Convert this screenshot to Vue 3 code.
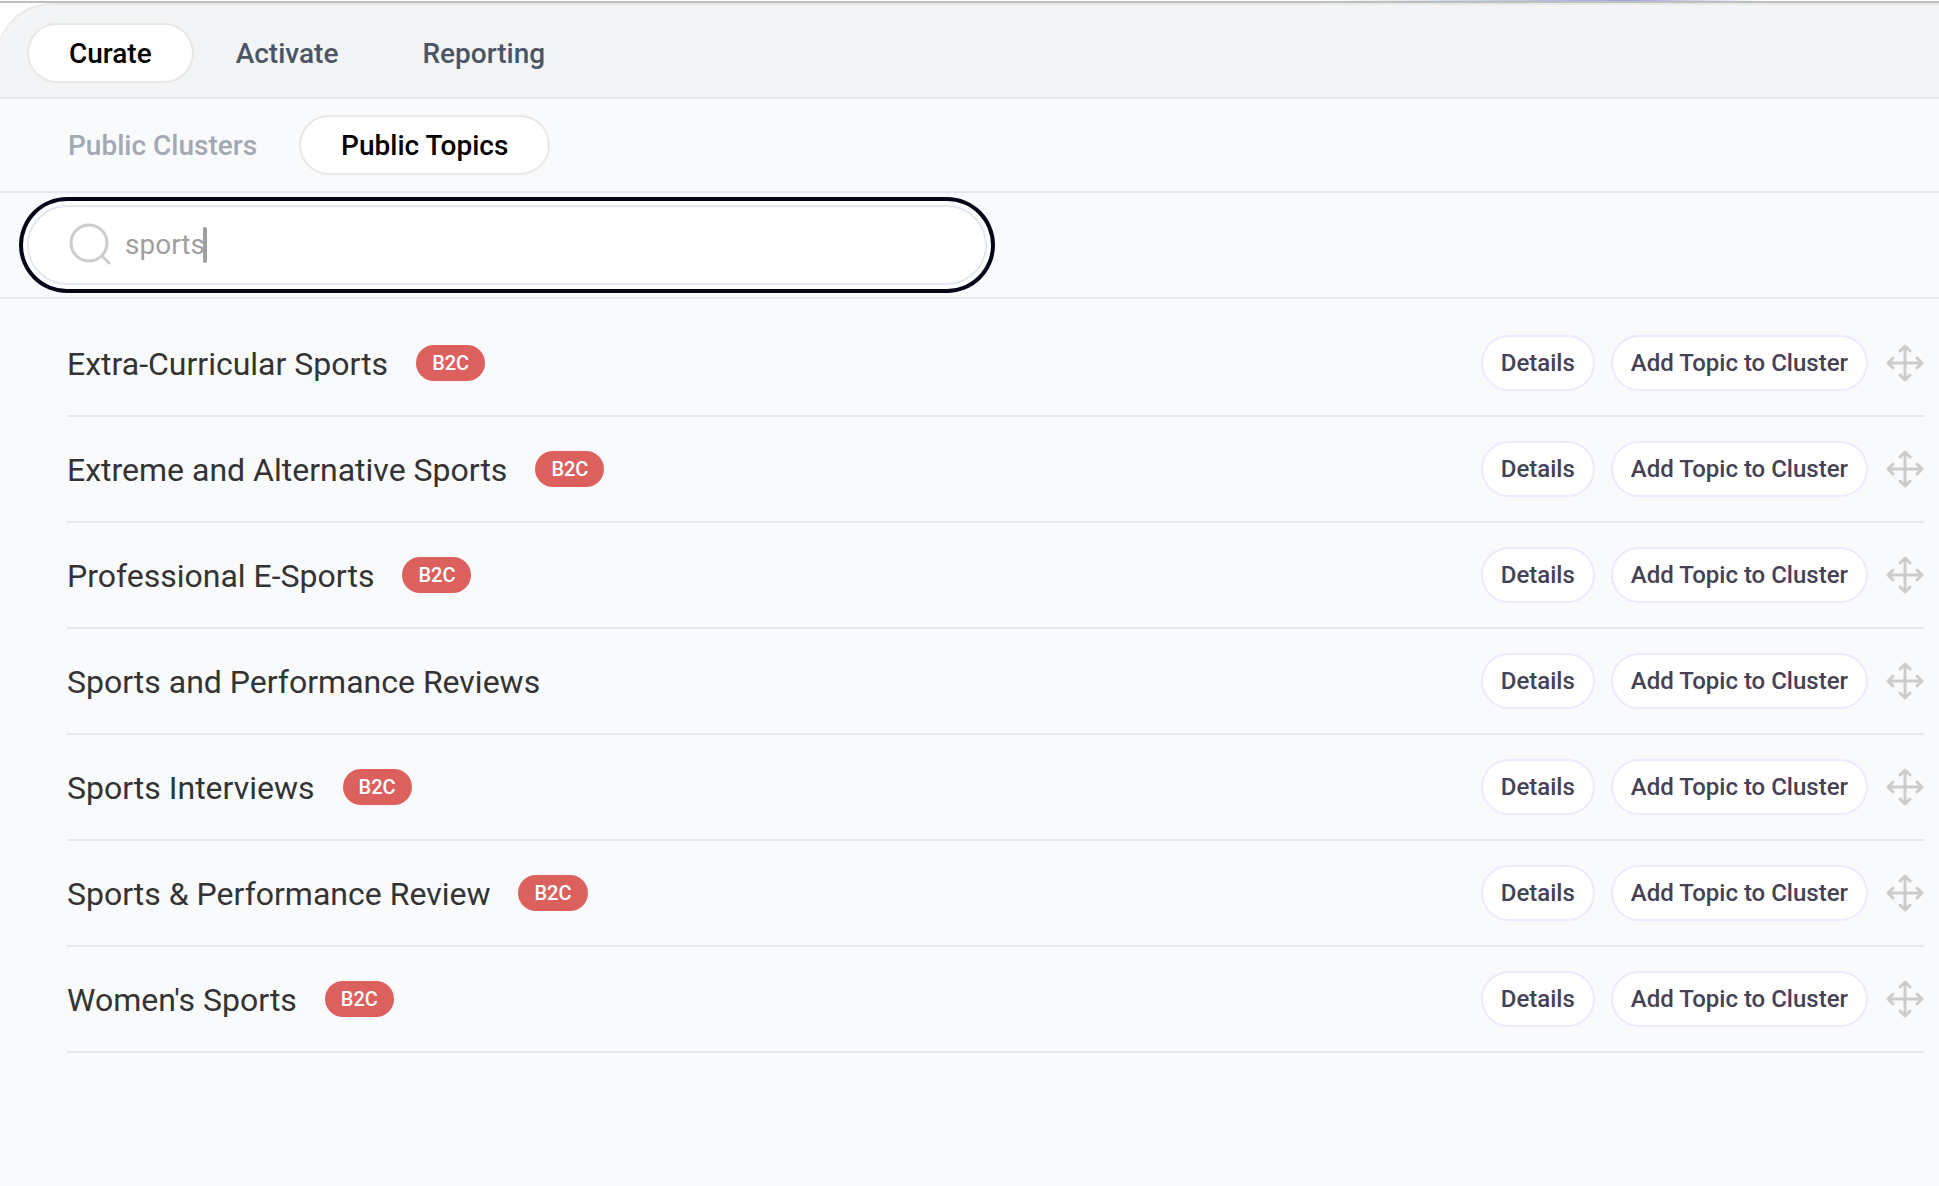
<script setup>
import { ref } from 'vue'

const query = ref('sports')
const mainTabs = ['Curate', 'Activate', 'Reporting']
const subTabs = ['Public Clusters', 'Public Topics']
const mainTab = ref('Curate')
const subTab = ref('Public Topics')

const topics = [
  { name: 'Extra-Curricular Sports', tag: 'B2C' },
  { name: 'Extreme and Alternative Sports', tag: 'B2C' },
  { name: 'Professional E-Sports', tag: 'B2C' },
  { name: 'Sports and Performance Reviews' },
  { name: 'Sports Interviews', tag: 'B2C' },
  { name: 'Sports & Performance Review', tag: 'B2C' },
  { name: "Women's Sports", tag: 'B2C' },
]
</script>

<template>
  <div class="app">
    <div class="topline"></div>
    <header class="header">
      <nav class="tabs main-tabs">
        <button
          v-for="tab in mainTabs"
          :key="tab"
          type="button"
          class="tab"
          :class="{ active: tab === mainTab }"
          @click="mainTab = tab"
        >{{ tab }}</button>
      </nav>
    </header>

    <nav class="tabs sub-tabs">
      <button
        v-for="tab in subTabs"
        :key="tab"
        type="button"
        class="tab"
        :class="{ active: tab === subTab }"
        @click="subTab = tab"
      >{{ tab }}</button>
    </nav>

    <section class="search-bar">
      <label class="search">
        <svg class="search-icon" viewBox="0 0 42 42" aria-hidden="true">
          <circle cx="20" cy="19" r="18" />
          <path d="M33 32l7 7" />
        </svg>
        <input v-model="query" class="search-input" type="text" aria-label="Search topics" />
        <span class="caret"></span>
      </label>
    </section>

    <ul class="topics">
      <li v-for="topic in topics" :key="topic.name" class="topic">
        <span class="name">{{ topic.name }}</span>
        <span v-if="topic.tag" class="badge">{{ topic.tag }}</span>
        <div class="actions">
          <button type="button" class="action">Details</button>
          <button type="button" class="action">Add Topic to Cluster</button>
          <svg class="move" viewBox="0 0 40 40" aria-hidden="true">
            <path d="M21 4v32M5 20h32M16 8l5-5 5 5M16 32l5 5 5-5M9 15l-5 5 5 5M33 15l5 5-5 5" />
          </svg>
        </div>
      </li>
    </ul>
  </div>
</template>

<style>
body {
  background: #f9fafc;
}
</style>

<style scoped>
.app {
  min-height: 100vh;
  overflow-x: hidden;
  font-family: Roboto, "Liberation Sans", sans-serif;
  color: #333;
}

button,
input {
  font-family: inherit;
}

.topline {
  height: 1px;
  border-bottom: 2px solid #bdc0bd;
  background: linear-gradient(90deg, #fff 68%, #c4d4ea 76%, #9fa4e6 84%, #fff 91%);
}

.header {
  background: #fff;
}

.tabs {
  display: flex;
  border-bottom: 2px solid #e5e7eb;
}

.main-tabs {
  margin-left: -4px;
  padding: 18px 30px 14px;
  border-top: 2px solid #e7e8e8;
  border-left: 1px solid #e7e8e8;
  border-top-left-radius: 56px;
  background: #f3f4f6;
}

.sub-tabs {
  padding: 16px 26px;
}

.tab {
  height: 60px;
  padding: 2px 40px 0;
  border: 2px solid transparent;
  border-radius: 30px;
  background: transparent;
  color: #4b5563;
  font-size: 28px;
  font-weight: 500;
  line-height: 36px;
}

.sub-tabs .tab {
  color: #a3a8b2;
}

.tabs .tab.active {
  border-color: #e7e8e8;
  background: #fff;
  color: #000;
}

.search-bar {
  padding: 12px 27px;
  border-bottom: 2px solid #e5e7eb;
}

.search {
  display: flex;
  align-items: center;
  box-sizing: border-box;
  max-width: 960px;
  height: 80px;
  padding: 0 40px;
  border: 2px solid #e2e8f0;
  border-radius: 40px;
  background: #fff;
  box-shadow: 0 0 0 4px #fff, 0 0 0 8px #020617;
}

.search-icon {
  width: 42px;
  height: 42px;
  margin-right: 14px;
  overflow: visible;
  fill: none;
  stroke: #ccc;
  stroke-width: 3;
  stroke-linecap: round;
}

.search-input {
  field-sizing: content;
  padding: 0;
  border: 0;
  outline: 0;
  background: transparent;
  color: #9f9f9f;
  font-size: 28px;
  line-height: 36px;
}

.caret {
  width: 4px;
  height: 36px;
  margin-left: -2px;
  border-radius: 2px;
  background: #9f9f9f;
}

.topics {
  margin: 0;
  padding: 12px 15px 0 67px;
  list-style: none;
}

.topic {
  display: flex;
  align-items: center;
  height: 104px;
  border-bottom: 2px solid #e2e8f0;
}

.name {
  padding-top: 2px;
  font-size: 32px;
  line-height: 40px;
}

.badge {
  margin-left: 28px;
  padding: 0 16px;
  border-radius: 18px;
  background: #dc615e;
  color: #fff;
  font-size: 20px;
  font-weight: 500;
  line-height: 36px;
}

.actions {
  display: flex;
  align-items: center;
  gap: 16px;
  margin-left: auto;
}

.action {
  height: 56px;
  padding: 0 18px;
  border: 2px solid #ede9fe;
  border-radius: 28px;
  background: #fff;
  color: #454254;
  font-size: 24px;
  font-weight: 500;
  line-height: 32px;
}

.move {
  width: 40px;
  height: 40px;
  fill: none;
  stroke: #ccc;
  stroke-width: 3;
  stroke-linecap: round;
  stroke-linejoin: round;
}
</style>
